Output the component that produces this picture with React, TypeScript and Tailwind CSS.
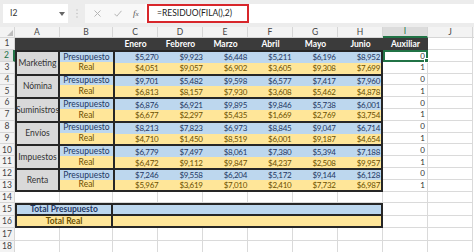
import React from "react";

const groups = [
  { name: "Marketing", p: ["5,270", "9,923", "6,448", "5,211", "6,196", "8,952"], r: ["4,051", "9,057", "6,902", "3,605", "9,308", "7,699"] },
  { name: "Nómina", p: ["9,701", "5,482", "9,598", "6,577", "7,417", "7,960"], r: ["6,813", "8,157", "7,930", "3,608", "5,462", "4,878"] },
  { name: "Suministros", p: ["6,876", "6,921", "9,895", "9,846", "5,738", "6,001"], r: ["6,677", "2,297", "5,435", "1,669", "2,769", "3,754"] },
  { name: "Envíos", p: ["8,213", "7,823", "6,973", "8,845", "9,047", "6,714"], r: ["4,710", "1,450", "8,519", "6,001", "9,187", "4,654"] },
  { name: "Impuestos", p: ["6,779", "7,497", "8,061", "7,380", "5,394", "7,188"], r: ["6,472", "9,112", "9,847", "4,237", "2,508", "9,957"] },
  { name: "Renta", p: ["7,246", "9,558", "6,204", "5,172", "9,144", "6,128"], r: ["5,967", "3,619", "7,010", "2,410", "7,732", "6,987"] },
];

const months = ["Enero", "Febrero", "Marzo", "Abril", "Mayo", "Junio"];
const cols = ["A", "B", "C", "D", "E", "F", "G", "H", "I", "J"];

function RowNum({ n, active }: { n: number; active?: boolean }) {
  return (
    <div
      className={
        active
          ? "flex items-center justify-center border-b border-r-2 border-b-[#d6d6d6] border-r-[#217346] bg-[#e1e1e1] text-[#217346]"
          : "flex items-center justify-center border-b border-r border-[#d6d6d6] bg-[#f3f3f3] text-[#444]"
      }
    >
      {n}
    </div>
  );
}

function Blank() {
  return <div className="border-b border-r border-[#dadada] bg-white" />;
}

function Aux({ v, selected }: { v: string; selected?: boolean }) {
  if (selected) {
    return (
      <div className="relative flex items-center justify-end border-2 border-[#217346] bg-white pr-px text-[8px] text-[#333]">
        {v}
        <span className="absolute -bottom-[3px] -right-[3px] h-[5px] w-[5px] border border-white bg-[#217346]" />
      </div>
    );
  }
  return (
    <div className="flex items-center justify-end border-b border-r border-[#dadada] bg-white pr-[2px] text-[8px] text-[#333]">
      {v}
    </div>
  );
}

export default function App() {
  return (
    <div className="h-[252px] w-[474px] overflow-hidden bg-white font-['Lato',sans-serif] text-[8.5px] leading-none">
      {/* formula bar */}
      <div className="flex h-[27px] items-start bg-[#ececec] pt-[4px]">
        <div className="ml-[3px] flex h-[19px] w-[65px] items-center justify-between bg-white pl-[7px] pr-[3px] text-[#333]">
          <span>I2</span>
          <svg width="6" height="4" viewBox="0 0 6 4">
            <path d="M0 0h6L3 4z" fill="#666" />
          </svg>
        </div>
        <div className="flex h-[19px] w-[17px] items-center justify-center">
          <svg width="2" height="9" viewBox="0 0 2 9">
            <circle cx="1" cy="1" r="0.8" fill="#c4c4c4" />
            <circle cx="1" cy="4.5" r="0.8" fill="#c4c4c4" />
            <circle cx="1" cy="8" r="0.8" fill="#c4c4c4" />
          </svg>
        </div>
        <div className="flex h-[19px] w-[60px] items-center bg-[#f8f8f8]">
          <svg className="ml-[9px]" width="7" height="7" viewBox="0 0 7 7">
            <path d="M0.5 0.5l6 6M6.5 0.5l-6 6" stroke="#b5b5b5" strokeWidth="1" />
          </svg>
          <svg className="ml-[13px]" width="8" height="7" viewBox="0 0 8 7">
            <path d="M0.5 3.8l2.3 2.4L7.5 0.8" stroke="#b5b5b5" strokeWidth="1" fill="none" />
          </svg>
          <span className="ml-[11px] font-['Liberation_Serif',serif] text-[9px] italic text-[#555]">
            f<span className="text-[7px]">x</span>
          </span>
        </div>
        <div className="h-[19px] flex-1 bg-white">
          <div className="ml-[2px] flex h-[19px] w-[102px] items-center border-2 border-[#d8262b] pl-[8px] text-[8.5px] text-[#222]">
            =RESIDUO(FILA(),2)
          </div>
        </div>
      </div>

      {/* sheet */}
      <div className="grid grid-cols-[15px_45px_53px_repeat(6,45px)_45px_45px_1fr] grid-rows-[11px_12px_repeat(13,11.8px)_repeat(4,12.4px)]">
        {/* column headers */}
        <div className="relative border-b border-r border-[#d6d6d6] bg-[#f3f3f3]">
          <svg className="absolute bottom-[1px] right-[1px]" width="6" height="6" viewBox="0 0 6 6">
            <path d="M6 0v6H0z" fill="#bdbdbd" />
          </svg>
        </div>
        {cols.map((c) => (
          <div
            key={c}
            className={
              c === "I"
                ? "flex items-center justify-center border-b-2 border-r border-b-[#217346] border-r-[#d6d6d6] bg-[#dcdcdc] text-[#217346]"
                : "flex items-center justify-center border-b border-r border-[#d6d6d6] bg-[#f3f3f3] text-[#444]"
            }
          >
            {c}
          </div>
        ))}
        <div className="border-b border-[#d6d6d6] bg-[#f3f3f3]" />

        {/* row 1 */}
        <RowNum n={1} />
        <div className="col-span-2 bg-[#3b3b3b]" />
        {months.map((m) => (
          <div key={m} className="flex items-center justify-center bg-[#3b3b3b] font-bold text-white">
            {m}
          </div>
        ))}
        <div className="flex items-center justify-center bg-[#3b3b3b] font-bold text-white">Auxiliar</div>
        <Blank />
        <div />

        {/* groups */}
        {groups.map((g, i) => {
          const last = i === groups.length - 1;
          const n = 2 + i * 2;
          return (
            <React.Fragment key={g.name}>
              <RowNum n={n} active={n === 2} />
              <div
                className={
                  last
                    ? "row-span-2 flex items-center justify-center border-2 border-[#262626] bg-[#d9d9d9] text-[#333]"
                    : "row-span-2 flex items-center justify-center border-x-2 border-t-2 border-[#262626] bg-[#d9d9d9] text-[#333]"
                }
              >
                {g.name}
              </div>
              <div className="flex items-center justify-center border-t-2 border-[#262626] bg-[#bdd7ee] text-[#1f3864]">
                Presupuesto
              </div>
              <div
                className={
                  last
                    ? "col-span-6 row-span-2 grid grid-cols-6 grid-rows-2 border-2 border-[#262626] text-[8px] tracking-[-0.3px]"
                    : "col-span-6 row-span-2 grid grid-cols-6 grid-rows-2 border-x-2 border-t-2 border-[#262626] text-[8px] tracking-[-0.3px]"
                }
              >
                {g.p.map((v, k) => (
                  <div key={"p" + k} className="flex items-center justify-end bg-[#bdd7ee] pr-px text-[#1f3864]">
                    ${v}
                  </div>
                ))}
                {g.r.map((v, k) => (
                  <div key={"r" + k} className="flex items-center justify-end bg-[#ffe699] pr-px text-[#6b5000]">
                    ${v}
                  </div>
                ))}
              </div>
              <Aux v="0" selected={n === 2} />
              <Blank />
              <div />

              <RowNum n={n + 1} />
              <div
                className={
                  last
                    ? "flex items-center justify-center border-b-2 border-[#262626] bg-[#ffe699] text-[#6b5000]"
                    : "flex items-center justify-center bg-[#ffe699] text-[#6b5000]"
                }
              >
                Real
              </div>
              <Aux v="1" />
              <Blank />
              <div />
            </React.Fragment>
          );
        })}

        {/* row 14 */}
        <RowNum n={14} />
        {cols.map((c) => (
          <Blank key={"14" + c} />
        ))}
        <div />

        {/* row 15 */}
        <RowNum n={15} />
        <div className="col-span-2 flex items-center justify-center border-2 border-[#262626] bg-[#bdd7ee] font-bold text-[#1f3864]">
          Total Presupuesto
        </div>
        <div className="col-span-6 border-y-2 border-r-2 border-[#262626] bg-[#bdd7ee]" />
        <Blank />
        <Blank />
        <div />

        {/* row 16 */}
        <RowNum n={16} />
        <div className="col-span-2 flex items-center justify-center border-x-2 border-b-2 border-[#262626] bg-[#ffe699] font-bold text-[#6b5000]">
          Total Real
        </div>
        <div className="col-span-6 border-b-2 border-r-2 border-[#262626] bg-[#ffe699]" />
        <Blank />
        <Blank />
        <div />

        {/* rows 17-18 */}
        <RowNum n={17} />
        {cols.map((c) => (
          <Blank key={"17" + c} />
        ))}
        <div />
        <RowNum n={18} />
        {cols.map((c) => (
          <Blank key={"18" + c} />
        ))}
        <div />
      </div>
    </div>
  );
}
